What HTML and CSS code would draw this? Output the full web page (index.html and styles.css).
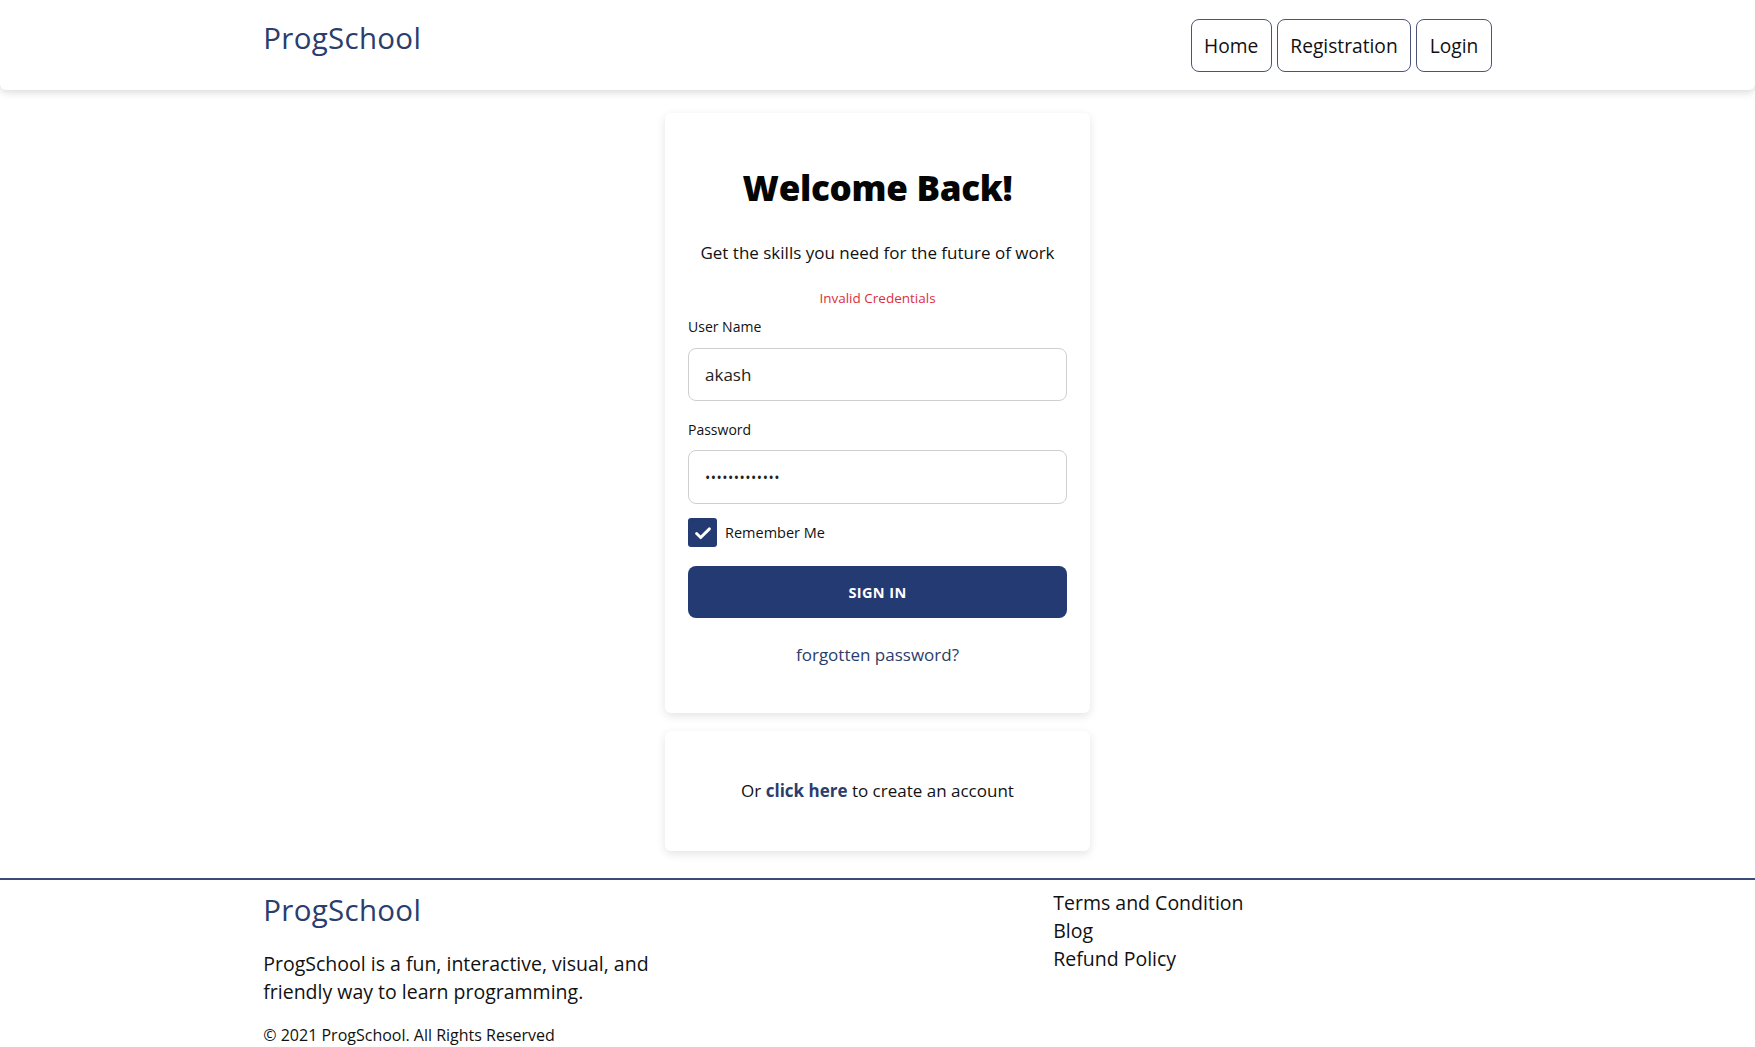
FILE: index.html
```html
<!DOCTYPE html>
<html lang="en">
<head>
<meta charset="utf-8">
<title>ProgSchool - Login</title>
<link rel="stylesheet" href="styles.css">
</head>
<body>
<header class="topbar">
  <div class="container topbar-inner">
    <a class="brand" href="#">ProgSchool</a>
    <nav class="nav">
      <a class="nav-btn" href="#">Home</a>
      <a class="nav-btn" href="#">Registration</a>
      <a class="nav-btn" href="#">Login</a>
    </nav>
  </div>
</header>

<main class="main">
  <section class="card login-card">
    <h1 class="title">Welcome Back!</h1>
    <p class="subtitle">Get the skills you need for the future of work</p>
    <p class="error">Invalid Credentials</p>
    <label class="label" for="user">User Name</label>
    <input class="field" id="user" type="text" value="akash">
    <label class="label label-pass" for="pass">Password</label>
    <input class="field field-pass" id="pass" type="password" value="akashpassword">
    <div class="remember">
      <span class="check">
        <svg viewBox="0 0 24 24" width="22" height="22"><path d="M5 12.5l4.5 4.5L19 7.5" fill="none" stroke="#fff" stroke-width="3.2" stroke-linecap="round" stroke-linejoin="round"/></svg>
      </span>
      <span class="remember-text">Remember Me</span>
    </div>
    <button class="signin" type="button">SIGN IN</button>
    <a class="forgot" href="#">forgotten password?</a>
  </section>

  <section class="card signup-card">
    <p class="signup-text">Or <a class="strong-link" href="#">click here</a> to create an account</p>
  </section>
</main>

<footer class="footer">
  <div class="container footer-inner">
    <div class="footer-left">
      <div class="brand footer-brand">ProgSchool</div>
      <p class="footer-desc">ProgSchool is a fun, interactive, visual, and friendly way to learn programming.</p>
      <p class="copy">© 2021 ProgSchool. All Rights Reserved</p>
    </div>
    <ul class="footer-links">
      <li><a href="#">Terms and Condition</a></li>
      <li><a href="#">Blog</a></li>
      <li><a href="#">Refund Policy</a></li>
    </ul>
  </div>
</footer>
</body>
</html>
```

FILE: styles.css
```css
* { box-sizing: border-box; }
html, body { margin: 0; padding: 0; }
body {
  font-family: "Open Sans", "Liberation Sans", sans-serif;
  color: #111;
  background: #ffffff;
}
a { text-decoration: none; color: inherit; }

.container {
  width: 70%;
  margin: 0 auto;
}

.topbar {
  height: 90px;
  background: #fff;
  border-radius: 0 0 6px 6px;
  box-shadow: 0 2px 8px rgba(0,0,0,0.16);
}
.topbar-inner {
  display: flex;
  justify-content: space-between;
  align-items: flex-start;
}
.brand {
  font-size: 29.5px;
  line-height: 40px;
  color: #2b3d6d;
  font-weight: 500;
  letter-spacing: 0.3px;
}
.topbar .brand { margin-top: 18px; }
.nav {
  display: flex;
  gap: 5px;
  margin-top: 19px;
}
.nav-btn {
  height: 53px;
  display: flex;
  align-items: center;
  padding: 0 12.5px;
  border: 1px solid #4a5578;
  border-radius: 8px;
  font-size: 19.2px;
  color: #111;
}

.main {
  display: flex;
  flex-direction: column;
  align-items: center;
  padding-top: 23px;
}
.card {
  width: 425px;
  background: #fff;
  border-radius: 6px;
  box-shadow: 0 3px 10px rgba(0,0,0,0.11);
}
.login-card {
  display: flex;
  flex-direction: column;
  padding: 54px 23px 46px;
}
.title {
  margin: 0;
  text-align: center;
  font-size: 35px;
  line-height: 42px;
  font-weight: 800;
  color: #050505;
  letter-spacing: -0.3px;
}
.subtitle {
  margin: 32px 0 0;
  text-align: center;
  font-size: 17px;
  line-height: 24px;
  color: #111;
}
.error {
  margin: 23px 0 0;
  text-align: center;
  font-size: 13.5px;
  line-height: 20px;
  color: #dc2f3c;
}
.label {
  margin-top: 9px;
  font-size: 14px;
  line-height: 20px;
  color: #111;
}
.label-pass { margin-top: 19px; }
.field {
  margin-top: 11px;
  height: 53px;
  width: 100%;
  border: 1px solid #cfcfcf;
  border-radius: 8px;
  padding: 0 16px;
  font-family: "Open Sans", "Liberation Sans", sans-serif;
  font-size: 17px;
  color: #222;
  background: #fff;
  outline: none;
}
.field-pass { margin-top: 10px; height: 54px; font-size: 14px; letter-spacing: 0.5px; }
.remember {
  margin-top: 14px;
  display: flex;
  align-items: center;
  gap: 8px;
}
.check {
  width: 29px;
  height: 29px;
  border-radius: 3px;
  background: #233a73;
  display: flex;
  align-items: center;
  justify-content: center;
}
.remember-text {
  font-size: 14.5px;
  color: #111;
}
.signin {
  margin-top: 19px;
  height: 52px;
  width: 100%;
  border: none;
  border-radius: 8px;
  background: #233a73;
  color: #fff;
  font-family: "Open Sans", "Liberation Sans", sans-serif;
  font-weight: 700;
  font-size: 14.5px;
  letter-spacing: 0.4px;
}
.forgot {
  margin-top: 25px;
  text-align: center;
  font-size: 17px;
  line-height: 24px;
  color: #2b3d6d;
}
.signup-card {
  margin-top: 18px;
  height: 120px;
  display: flex;
  align-items: center;
  justify-content: center;
}
.signup-text {
  margin: 0 0 2px;
  font-size: 17px;
  color: #111;
}
.strong-link {
  font-weight: 700;
  color: #2b3d6d;
}

.footer {
  margin-top: 27px;
  border-top: 2px solid #3b4a78;
  padding-bottom: 20px;
}
.footer-inner {
  display: grid;
  grid-template-columns: 790px 1fr;
}
.footer-brand { margin-top: 10px; }
.footer-desc {
  margin: 20px 0 0;
  width: 420px;
  font-size: 19.5px;
  line-height: 28px;
  color: #111;
}
.copy {
  margin: 19px 0 0;
  font-size: 16px;
  line-height: 20px;
  color: #111;
}
.footer-links {
  list-style: none;
  margin: 9px 0 0;
  padding: 0;
  font-size: 19.5px;
  line-height: 28px;
}
.footer-links a { color: #111; }
```
